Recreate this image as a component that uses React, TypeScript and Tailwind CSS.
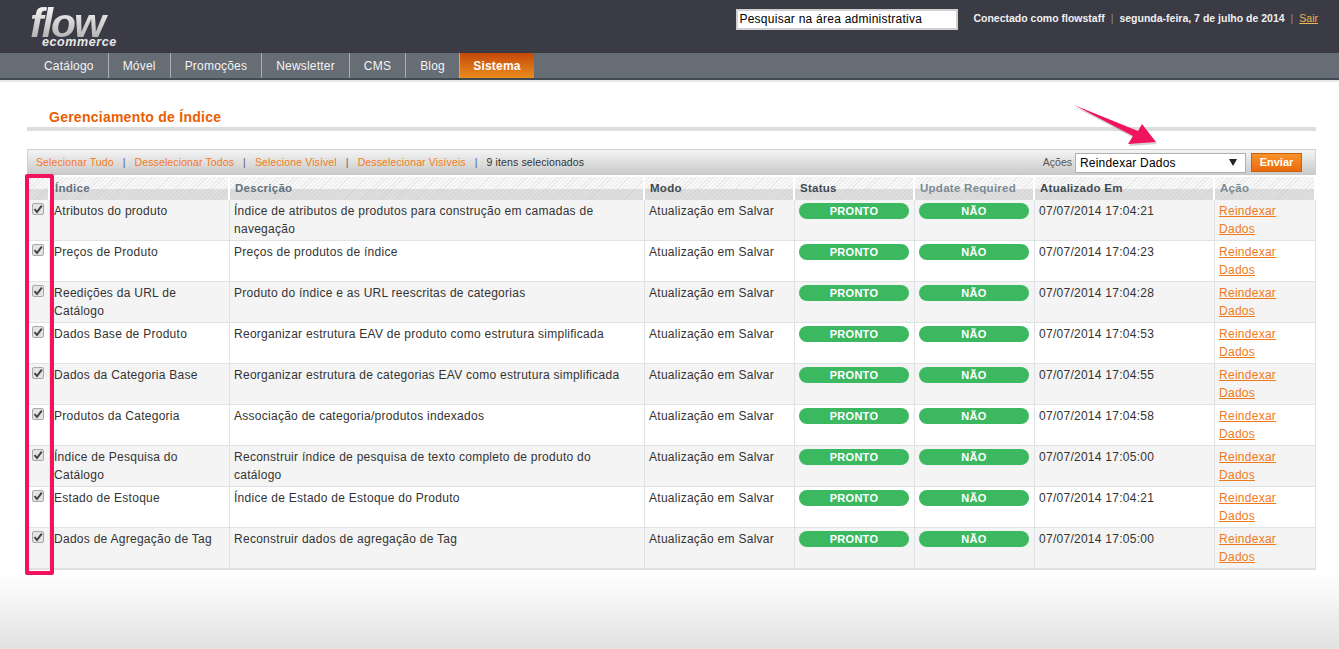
import React from 'react'

const navItems = ['Catálogo', 'Móvel', 'Promoções', 'Newsletter', 'CMS', 'Blog']

const rows = [
    { name: 'Atributos do produto', desc: 'Índice de atributos de produtos para construção em camadas de navegação', date: '07/07/2014 17:04:21' },
    { name: 'Preços de Produto', desc: 'Preços de produtos de índice', date: '07/07/2014 17:04:23' },
    { name: 'Reedições da URL de Catálogo', desc: 'Produto do índice e as URL reescritas de categorias', date: '07/07/2014 17:04:28' },
    { name: 'Dados Base de Produto', desc: 'Reorganizar estrutura EAV de produto como estrutura simplificada', date: '07/07/2014 17:04:53' },
    { name: 'Dados da Categoria Base', desc: 'Reorganizar estrutura de categorias EAV como estrutura simplificada', date: '07/07/2014 17:04:55' },
    { name: 'Produtos da Categoria', desc: 'Associação de categoria/produtos indexados', date: '07/07/2014 17:04:58' },
    { name: 'Índice de Pesquisa do Catálogo', desc: 'Reconstruir índice de pesquisa de texto completo de produto do catálogo', date: '07/07/2014 17:05:00' },
    { name: 'Estado de Estoque', desc: 'Índice de Estado de Estoque do Produto', date: '07/07/2014 17:04:21' },
    { name: 'Dados de Agregação de Tag', desc: 'Reconstruir dados de agregação de Tag', date: '07/07/2014 17:05:00' },
]

const headers = [
    { label: '', color: 'text-[#5f7280]' },
    { label: 'Índice', color: 'text-[#5f7280]' },
    { label: 'Descrição', color: 'text-[#5f7280]' },
    { label: 'Modo', color: 'text-[#3f4a52]' },
    { label: 'Status', color: 'text-[#3f4a52]' },
    { label: 'Update Required', color: 'text-[#7c8a94]' },
    { label: 'Atualizado Em', color: 'text-[#3f4a52]' },
    { label: 'Ação', color: 'text-[#7c8a94]' },
]

const toolbarLinks = ['Selecionar Tudo', 'Desselecionar Todos', 'Selecione Visível', 'Desselecionar Visíveis']

const Pill: React.FC<{ text: string }> = ({ text }) => (
    <div className="mt-[1px] mr-[1px] flex h-[16px] items-center justify-center rounded-full bg-[#3cb861] text-[11px] font-bold text-white">
        {text}
    </div>
)

const Checkbox: React.FC = () => (
    <span className="mx-auto mt-[3px] flex h-[12px] w-[12px] items-center justify-center rounded-[2px] border border-[#a8a8a8] bg-[#e4e4e4]">
        <svg width="10" height="10" viewBox="0 0 10 10">
            <path d="M1.5 5.2 L4 8 L8.8 1.6" fill="none" stroke="#444" strokeWidth="2" />
        </svg>
    </span>
)

const App: React.FC = () => {
    return (
        <div className="relative flex min-h-screen flex-col overflow-hidden bg-white font-['Liberation_Sans',Arial,sans-serif] text-[12px] text-[#333]">
            <header className="flex h-[53px] justify-between bg-[#3b3b45] pr-[21px]">
                <div className="ml-[30px] flex flex-col pt-[2px] italic">
                    <span className="bg-gradient-to-b from-white to-[#a8a8a8] bg-clip-text text-[41px] leading-[42px] font-bold tracking-[-2px] text-transparent">flow</span>
                    <span className="mt-[-9px] ml-[12px] text-[12.5px] leading-[14px] font-bold tracking-[0.6px] text-[#e8e8e8]">ecommerce</span>
                </div>
                <div className="flex items-start pt-[9px]">
                    <div className="h-[21px] w-[222px] border-2 border-[#d0d0d0] bg-white pl-[1px] text-[12px] leading-[17px] tracking-[0.25px] text-black">
                        Pesquisar na área administrativa
                    </div>
                    <div className="ml-[15px] flex h-[20px] items-center text-[10.5px] font-bold text-[#f0f0f0]">
                        <span>Conectado como flowstaff</span>
                        <span className="mx-[6px] font-normal text-[#8a8a90]">|</span>
                        <span>segunda-feira, 7 de julho de 2014</span>
                        <span className="mx-[6px] font-normal text-[#8a8a90]">|</span>
                        <span className="font-normal text-[#f2b54d] underline">Sair</span>
                    </div>
                </div>
            </header>

            <nav className="flex h-[27px] border-b-2 border-[#3f4a52] bg-[#666d75] pl-[30px] tracking-[0.2px] text-[#f4f4f4]">
                {navItems.map((item) => (
                    <div key={item} className="flex items-center border-r border-[#a9aeb3] px-[14px] leading-none">
                        {item}
                    </div>
                ))}
                <div className="flex w-[74px] items-center justify-center bg-gradient-to-b from-[#c4470a] to-[#e98c1c] font-bold text-white">
                    Sistema
                </div>
            </nav>
            <div className="h-[2px] bg-[#e8e8e8]" />

            <main className="px-[23px] pr-[23px] pl-[27px]">
                <div className="mt-[25px] h-[24px] border-b-4 border-[#dedede] pl-[22px]">
                    <h1 className="text-[14px] leading-[20px] font-bold tracking-[0.25px] text-[#eb5e00]">Gerenciamento de Índice</h1>
                </div>
                <div className="mt-[18px] flex h-[26px] items-center justify-between border-x border-t border-[#d0d0d0] bg-gradient-to-b from-[#f4f4f4] to-[#c9c9c9] pr-[13px] pl-[8px] text-[10.5px]">
                    <div className="flex items-center tracking-[0.12px]">
                        {toolbarLinks.map((link) => (
                            <React.Fragment key={link}>
                                <span className="text-[#f47a20]">{link}</span>
                                <span className="mx-[9px] text-[#55606a]">|</span>
                            </React.Fragment>
                        ))}
                        <span className="text-[#333]">9 itens selecionados</span>
                    </div>
                    <div className="flex items-center">
                        <span className="mr-[3px] text-[#555]">Ações</span>
                        <div className="flex h-[20px] w-[171px] items-center justify-between border border-[#b0b0b0] bg-white pr-[8px] pl-[4px] text-[12px] tracking-[0.2px] text-black">
                            <span>Reindexar Dados</span>
                            <svg width="8" height="7" viewBox="0 0 8 7"><path d="M0 0H8L4 7Z" fill="#222" /></svg>
                        </div>
                        <div className="ml-[5px] flex h-[19px] w-[51px] items-center justify-center border border-[#c9610c] bg-gradient-to-b from-[#f9932a] to-[#ea6a0c] text-[11px] font-bold text-white">
                            Enviar
                        </div>
                    </div>
                </div>

                <table className="mt-[2px] w-[1289px] table-fixed border-separate border-spacing-0 border-b border-[#dcdcdc] tracking-[0.27px]">
                    <colgroup>
                        <col className="w-[23px]" />
                        <col className="w-[180px]" />
                        <col className="w-[415px]" />
                        <col className="w-[150px]" />
                        <col className="w-[120px]" />
                        <col className="w-[120px]" />
                        <col className="w-[180px]" />
                        <col />
                    </colgroup>
                    <thead>
                        <tr>
                            {headers.map((h, i) => (
                                <th
                                    key={i}
                                    className={`h-[23px] border-r-2 border-white bg-[linear-gradient(to_bottom,transparent_50%,rgba(190,190,190,0.45)_50%),repeating-linear-gradient(135deg,#e9e9e9_0px,#e9e9e9_1px,#f8f8f8_1px,#f8f8f8_3px)] pl-[5px] text-left text-[11.5px] font-bold ${h.color}`}
                                >
                                    {h.label}
                                </th>
                            ))}
                        </tr>
                    </thead>
                    <tbody>
                        {rows.map((row, i) => {
                            const cell = 'h-[41px] border-r border-b border-[#dfe3e3] px-[4px] pt-[2px] align-top leading-[18px]'
                            return (
                                <tr key={row.name} className={i % 2 === 0 ? 'bg-[#f4f4f4]' : 'bg-white'}>
                                    <td className="h-[41px] border-r border-b border-[#dfe3e3] align-top"><Checkbox /></td>
                                    <td className={cell}>{row.name}</td>
                                    <td className={cell}>{row.desc}</td>
                                    <td className={cell}>Atualização em Salvar</td>
                                    <td className={cell}><Pill text="PRONTO" /></td>
                                    <td className={cell}><Pill text="NÃO" /></td>
                                    <td className={cell}>{row.date}</td>
                                    <td className={`${cell} text-[#f07a1a] underline`}>Reindexar Dados</td>
                                </tr>
                            )
                        })}
                    </tbody>
                </table>
            </main>

            <div className="mt-[3px] flex-1 bg-gradient-to-b from-white to-[#e2e2e2]" />

            {/* annotations drawn on top of the screenshot */}
            <div className="absolute top-[174px] left-[25px] h-[401px] w-[29px] rounded-[2px] border-4 border-[#f5115c]" />
            <svg className="absolute top-[100px] left-[1068px]" width="100" height="50" viewBox="0 0 100 50">
                <path d="M6 5 L70 31 L74 24 L88 42 L60 44 L65 36 Z" fill="#9a9a9a" opacity="0.45" transform="translate(1 2)" />
                <path d="M6 5 L70 31 L74 24 L88 42 L60 44 L65 36 Z" fill="#f0145f" />
            </svg>
        </div>
    )
}

export default App
